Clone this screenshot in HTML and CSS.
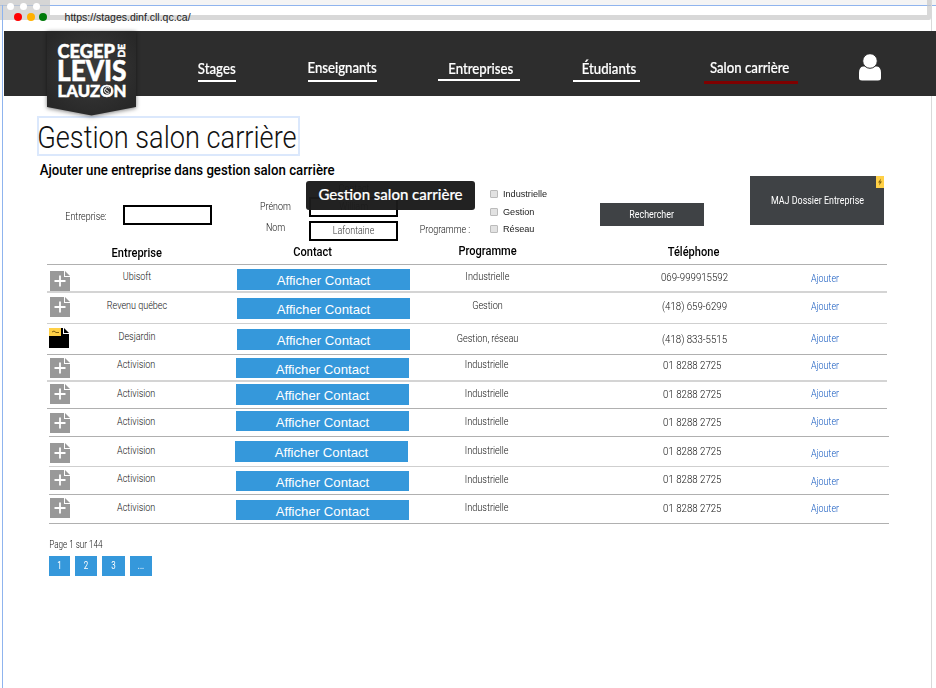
FILE: index.html
```html
<!DOCTYPE html>
<html lang="fr">
<head>
<meta charset="utf-8">
<title>Gestion salon carrière</title>
<link rel="stylesheet" href="styles.css">
</head>
<body>
<svg class="defs" width="0" height="0">
  <symbol id="add-file" viewBox="0 0 20 20">
    <path fill="currentColor" d="M0 0H14V6H20V20H0Z"/>
    <path fill="currentColor" d="M15 0L20 5H15Z"/>
    <path stroke="#fff" stroke-width="1.8" d="M10 4.5V15.5M4.5 10H15.5"/>
  </symbol>
</svg>
<div class="window">
  <div class="chrome">
    <div class="tab"><i></i><i></i><i></i></div>
    <div class="frame"></div>
    <div class="address">
      <i class="dot red"></i><i class="dot amber"></i><i class="dot green"></i>
      <span class="url">https://stages.dinf.cll.qc.ca/</span>
    </div>
  </div>
  <header class="header">
    <svg class="logo" viewBox="0 0 98 94" width="98" height="94">
      <defs>
        <radialGradient id="g" cx="50%" cy="45%" r="60%"><stop offset="0" stop-color="#3b3b3b"/><stop offset="1" stop-color="#282828"/></radialGradient>
      </defs>
      <path class="badge" fill="url(#g)" d="M4 0H93V76L48.500 84.500L4 76Z"/>
      <g class="logo-text">
        <text x="14.500" y="26.500" font-size="18.500" textLength="57.500" lengthAdjust="spacingAndGlyphs">CEGEP</text>
        <text transform="translate(82 26.500) rotate(-90)" font-size="9.500" textLength="13.500" lengthAdjust="spacingAndGlyphs">DE</text>
        <text x="14" y="49.500" font-size="27.500" textLength="69.500" lengthAdjust="spacingAndGlyphs">LEVIS</text>
        <text x="14.500" y="65.500" font-size="17.500" textLength="69" lengthAdjust="spacingAndGlyphs">LAUZON</text>
      </g>
      <circle cx="64" cy="59.500" r="4" fill="#333"/>
      <path d="M66.500 57.200A3 3 0 1 0 66.300 61.800M62.500 58.500L65.500 60.500" fill="none" stroke="#fff" stroke-width="1"/>
    </svg>
    <nav class="nav">
      <a class="stages"><span>Stages</span></a>
      <a class="enseignants"><span>Enseignants</span></a>
      <a class="entreprises"><span>Entreprises</span></a>
      <a class="etudiants"><span>Étudiants</span></a>
      <a class="salon"><span>Salon carrière</span></a>
    </nav>
    <svg class="user" viewBox="0 0 22 27" width="22" height="27">
      <path fill="#fff" d="M4 12.500Q0 13 0 19V24Q0 26.500 3 26.500H19Q22 26.500 22 24V19Q22 13 18 12.500Z"/>
      <circle cx="11" cy="7" r="7.300" fill="#fff" stroke="#2d2d2d" stroke-width="1"/>
    </svg>
  </header>
  <main class="main">
    <h1 class="title"><span>Gestion salon carrière</span></h1>
    <h2 class="subtitle"><span>Ajouter une entreprise dans gestion salon carrière</span></h2>
    <form class="filters">
      <div class="company"><label class="cond">Entreprise:</label><span class="field"></span></div>
      <div class="labels"><label class="cond">Prénom</label><label class="cond">Nom</label></div>
      <div class="contact">
        <span class="legend cond">Contact</span>
        <span class="field"><b class="cond">William</b></span>
        <span class="field"><b class="cond">Lafontaine</b></span>
        <div class="tooltip"><span>Gestion salon carrière</span></div>
      </div>
      <label class="cond programme">Programme :</label>
      <div class="checks">
        <label><i></i><span>Industrielle</span></label>
        <label><i></i><span>Gestion</span></label>
        <label><i></i><span>Réseau</span></label>
      </div>
      <div class="dark search"><span class="cond">Rechercher</span></div>
      <div class="dark update"><span class="cond">MAJ Dossier Entreprise</span>
        <svg class="flash" viewBox="0 0 8 12" width="8" height="12"><path fill="#ffd046" d="M0 0H8V12H0Z"/><path fill="#806010" d="M5 2.500L2 6.500H3.700L3 9.500L6 5.500H4.300Z"/></svg>
      </div>
    </form>
    <div class="heads">
      <b class="h1"><span>Entreprise</span></b><b class="h2"><span>Contact</span></b><b class="h3"><span>Programme</span></b><b class="h4"><span>Téléphone</span></b>
    </div>
    <div class="rows">
      <div class="row"><svg class="icon"><use href="#add-file"/></svg><span class="name cond">Ubisoft</span><a class="btn">Afficher Contact</a><span class="prog cond">Industrielle</span><span class="tel cond">069-999915592</span><a class="add cond">Ajouter</a></div>
      <div class="row"><svg class="icon"><use href="#add-file"/></svg><span class="name cond">Revenu québec</span><a class="btn">Afficher Contact</a><span class="prog cond">Gestion</span><span class="tel cond">(418) 659-6299</span><a class="add cond">Ajouter</a></div>
      <div class="row"><svg class="icon black" viewBox="0 0 20 20"><path d="M0 0H14V6H20V20H0Z"/><path d="M15 0L20 5H15Z"/><path fill="#ffd046" d="M0 0H12V8H0Z"/><path fill="none" stroke="#806010" d="M3 4L5 3L7 4.500L10 4.500"/></svg><span class="name cond">Desjardin</span><a class="btn">Afficher Contact</a><span class="prog cond">Gestion, réseau</span><span class="tel cond">(418) 833-5515</span><a class="add cond">Ajouter</a></div>
      <div class="row"><svg class="icon"><use href="#add-file"/></svg><span class="name cond">Activision</span><a class="btn">Afficher Contact</a><span class="prog cond">Industrielle</span><span class="tel cond">01 8288 2725</span><a class="add cond">Ajouter</a></div>
      <div class="row"><svg class="icon"><use href="#add-file"/></svg><span class="name cond">Activision</span><a class="btn">Afficher Contact</a><span class="prog cond">Industrielle</span><span class="tel cond">01 8288 2725</span><a class="add cond">Ajouter</a></div>
      <div class="row"><svg class="icon"><use href="#add-file"/></svg><span class="name cond">Activision</span><a class="btn">Afficher Contact</a><span class="prog cond">Industrielle</span><span class="tel cond">01 8288 2725</span><a class="add cond">Ajouter</a></div>
      <div class="row"><svg class="icon"><use href="#add-file"/></svg><span class="name cond">Activision</span><a class="btn">Afficher Contact</a><span class="prog cond">Industrielle</span><span class="tel cond">01 8288 2725</span><a class="add cond">Ajouter</a></div>
      <div class="row"><svg class="icon"><use href="#add-file"/></svg><span class="name cond">Activision</span><a class="btn">Afficher Contact</a><span class="prog cond">Industrielle</span><span class="tel cond">01 8288 2725</span><a class="add cond">Ajouter</a></div>
      <div class="row"><svg class="icon"><use href="#add-file"/></svg><span class="name cond">Activision</span><a class="btn">Afficher Contact</a><span class="prog cond">Industrielle</span><span class="tel cond">01 8288 2725</span><a class="add cond">Ajouter</a></div>
    </div>
    <div class="summary"><span class="cond">Page 1 sur 144</span></div>
    <div class="pager"><a><span>1</span></a><a><span>2</span></a><a><span>3</span></a><a><span>...</span></a></div>
  </main>
</div>
</body>
</html>
```
FILE: styles.css
```css
* { box-sizing: border-box; }
body { margin: 0; background: #fff; font-family: Roboto, "Liberation Sans", sans-serif; }
.defs { position: absolute; }
.window { width: 936px; height: 688px; overflow: hidden; position: relative; display: flex; flex-direction: column; }
.window::before { content: ""; position: absolute; left: 2px; top: 5px; bottom: 0; width: 1px; background: #8fb4ee; z-index: 2; }
.window::after { content: ""; position: absolute; left: 931px; top: 0; bottom: 0; width: 1px; background: #d9d9d9; }

/* browser chrome */
.chrome { position: relative; height: 31px; flex: none; background: linear-gradient(#f4f4f4 5px, #8fb4ee 5px, #8fb4ee 6px, #fff 6px); }
.tab { position: absolute; left: 0; top: 0; width: 50px; height: 20px; background: rgba(200,200,200,.7); display: flex; gap: 6px; padding: 3px 0 0 7px; }
.tab i { width: 7px; height: 7px; border-radius: 50%; background: #fff; }
.frame { position: absolute; left: 50px; top: 0; width: 881px; height: 20px; border: solid rgba(200,200,200,.7); border-width: 0 4px 5px 0; border-radius: 0 0 2px 0; }
.address { position: relative; display: flex; align-items: center; padding: 11px 0 0 14px; height: 23px; }
.dot { width: 8px; height: 8px; border-radius: 50%; margin-right: 4.700px; }
.red { background: #f00; }
.amber { background: #ffb000; }
.green { background: #007a0a; }
.url { font: 10.500px "Liberation Sans", sans-serif; color: #222; margin: -1px 0 0 12.500px; }

/* header */
.header { height: 65px; flex: none; background: #2d2d2d; margin-left: 4px; display: flex; position: relative; z-index: 1; }
.logo { margin-left: 39px; flex: none; overflow: visible; }
.badge { filter: drop-shadow(0 1px 2px rgba(0,0,0,.5)); }
.logo-text { fill: #fff; stroke: #fff; stroke-width: .5px; font-family: Lato, sans-serif; font-weight: 900; }
.nav { display: flex; width: 717px; margin-left: 53px; }
.nav a { display: flex; justify-content: center; height: 22px; border-bottom: 2px solid #fff; color: #fff; font: 500 14.500px/18px Lato, sans-serif; white-space: nowrap; }
.nav span { transform: scaleX(.91); -webkit-text-stroke: .2px #fff; }
.nav .stages { width: 38px; margin: 29px 0 0 4px; }
.nav .enseignants { width: 69px; margin: 29px 0 0 72px; line-height: 16px; }
.nav .entreprises { width: 82px; margin: 28px 0 0 61px; line-height: 20px; padding-left: 3px; }
.nav .etudiants { width: 67px; margin: 29px 0 0 53px; padding-left: 4px; }
.nav .salon { width: 94px; margin: 28px 0 0 64px; height: 25px; border-bottom: 3px solid #7f0000; line-height: 18px; padding-right: 3px; }
.user { margin: 23px 0 0 -52px; flex: none; }

/* page heading */
.main { padding-left: 37px; display: flex; flex-direction: column; }
.title { margin: 20px 0 0; width: 263px; height: 40px; border: 2px solid #dbe8fc; font-weight: 300; font-size: 31px; line-height: 39px; white-space: nowrap; color: #111; display: flex; justify-content: center; }
.title span { transform: translateX(-2px) scaleX(.877); }
.subtitle { margin: 5px 0 0 2px; height: 19px; width: 296px; font-size: 14.500px; font-weight: 500; line-height: 19px; white-space: nowrap; color: #000; display: flex; justify-content: center; }
.subtitle span { transform: translateX(.500px) scaleX(.912); }

.cond { font-size: 11px; font-weight: 300; line-height: 16px; white-space: nowrap; color: #111; transform: scaleX(.81); display: flex; justify-content: center; }

/* filters */
.filters { display: flex; height: 64px; align-items: flex-start; }
.company { display: flex; width: 175px; padding: 25px 0 0 28px; flex: none; }
.company label { width: 42px; margin-top: 4px; }
.company .field { margin-left: 16px; width: 90px; }
.field { display: flex; justify-content: center; align-items: center; border: 2px solid #000; width: 89px; height: 20px; }
.field .cond { color: #333; }
.labels { width: 96px; padding: 19px 0 0 43px; display: flex; flex-direction: column; gap: 5px; flex: none; }
.labels label { width: 41px; }
.contact { position: relative; padding: 17px 0 0 1px; display: flex; flex-direction: column; gap: 4px; width: 91px; flex: none; }
.legend { margin: -16px 0 -4px; }
.tooltip { position: absolute; left: -2px; top: 1px; width: 169px; height: 29px; background: rgba(27,27,27,.97); border-radius: 3px; color: #fff; font: 500 15px/27px Lato, sans-serif; display: flex; justify-content: center; white-space: nowrap; -webkit-text-stroke: .2px #fff; }
.programme { width: 50px; margin: 42px 0 0 21px; flex: none; }
.checks { width: 130px; flex: none; padding: 5px 0 0 20px; display: flex; flex-direction: column; font: 9.500px/17.700px "Liberation Sans", sans-serif; color: #222; }
.checks label { display: flex; align-items: center; }
.checks span { transform: scaleX(.96); transform-origin: left; }
.checks i { width: 8px; height: 8px; margin-right: 5px; background: #e2e2e2; border: 1px solid #bbb; border-radius: 1px; }
.dark { background: #3f4245; display: flex; align-items: center; justify-content: center; position: relative; flex: none; }
.dark .cond { color: #fff; font-weight: 400; }
.search { width: 104px; height: 23px; margin-top: 23px; }
.update { width: 134px; height: 49px; margin: -4px 0 0 46px; }
.flash { position: absolute; right: 0; top: 0; }

/* table */
.heads { display: flex; height: 21px; margin-left: 10px; width: 840px; border-bottom: 1px solid #b0b0b0; }
.heads b { display: flex; justify-content: center; font-size: 13.500px; font-weight: 500; line-height: 16px; white-space: nowrap; }
.heads span { transform: scaleX(.82); }
.heads .h1 { width: 118px; margin: 0 0 0 31px; }
.heads .h2 { width: 70px; margin-left: 82px; margin-top: -1px; }
.heads .h3 { width: 70px; margin-left: 105px; margin-top: -2px; }
.heads .h4 { width: 70px; margin-left: 135px; margin-top: -1px; }
.rows { margin-left: 10px; }
.row { width: 840px; display: grid; grid-template-columns: 30px 118px 257px 71px 80px 183px 78px; align-items: start; border-bottom: 1px solid #b0b0b0; }
.icon { width: 20px; height: 20px; margin: calc(var(--icon) - 1px) 0 0 3px; color: #999; }
.icon.black { margin-left: 2px; }
.name { margin-top: var(--name); transform: translateX(1px) scaleX(.82); }
.btn { margin: var(--btn) 0 0 var(--x, 42px); width: 173px; height: 20.500px; background: #3598db; color: #fff; font: 13.200px/23.500px "Liberation Sans", sans-serif; text-align: center; }
.prog { margin-top: var(--prog); transform: scaleX(.83); }
.tel { grid-column: 6; margin-top: var(--tel); transform: scaleX(.88); }
.add { margin-top: var(--add); color: #1358bf; }
.row:nth-child(n+4) { --x: 41px; }
.row:nth-child(n+4) .tel, .row:nth-child(n+4) .prog, .row:nth-child(n+4) .name { padding-right: 2px; }
.row:nth-child(n+4) .tel { padding-right: 5px; }
.row:nth-child(n+6) { margin-left: 2px; grid-template-columns: 28px 118px 257px 71px 80px 183px 78px; }
.row:nth-child(n+6) .icon { margin-left: 1px; }
.row:nth-child(1) { height: 28px; --icon: 7px; --name: 4px; --btn: 4px; --prog: 4px; --tel: 5px; --add: 6px; border-bottom: 2px solid #d4d4d4; }
.row:nth-child(2) { height: 31px; --icon: 5px; --name: 5px; --btn: 5px; --prog: 5px; --tel: 6px; --add: 6px; border-color: #cfcfcf; }
.row:nth-child(3) { height: 31px; --icon: 5px; --name: 5px; --btn: 5px; --prog: 7px; --tel: 8px; --add: 7px; }
.row:nth-child(4) { height: 27px; --icon: 4px; --name: 2px; --btn: 2.500px; --prog: 2px; --tel: 3px; --add: 3px; border-bottom: 2px solid #d4d4d4; }
.row:nth-child(5) { height: 27px; --icon: 3px; --name: 4px; --btn: 2px; --prog: 4px; --tel: 5px; --add: 4px; }
.row:nth-child(6) { height: 28px; --icon: 5px; --name: 5px; --btn: 1.500px; --prog: 5px; --tel: 6px; --add: 5px; }
.row:nth-child(7) { height: 30px; --icon: 7px; --name: 6px; --btn: 4px; --prog: 6px; --tel: 7px; --add: 9px; --x: 40px; border-color: #cfcfcf; }
.row:nth-child(8) { height: 28px; --icon: 4px; --name: 4px; --btn: 3.500px; --prog: 5px; --tel: 5px; --add: 7px; }
.row:nth-child(9) { height: 29px; --icon: 4px; --name: 5px; --btn: 4.500px; --prog: 5px; --tel: 6px; --add: 6px; }

/* pagination */
.summary { margin: 13px 0 0 12px; width: 53px; display: flex; justify-content: center; }
.summary .cond { font-size: 10px; }
.pager { display: flex; gap: 5px; margin: 3px 0 0 12px; }
.pager a { width: 22px; height: 20px; background: #3598db; color: #fff; font-size: 10px; line-height: 20px; text-align: center; }
.pager a:first-child { width: 21px; }
.pager a:nth-child(3) { width: 23px; }
.pager span { display: block; transform: scaleX(.8); }
```
